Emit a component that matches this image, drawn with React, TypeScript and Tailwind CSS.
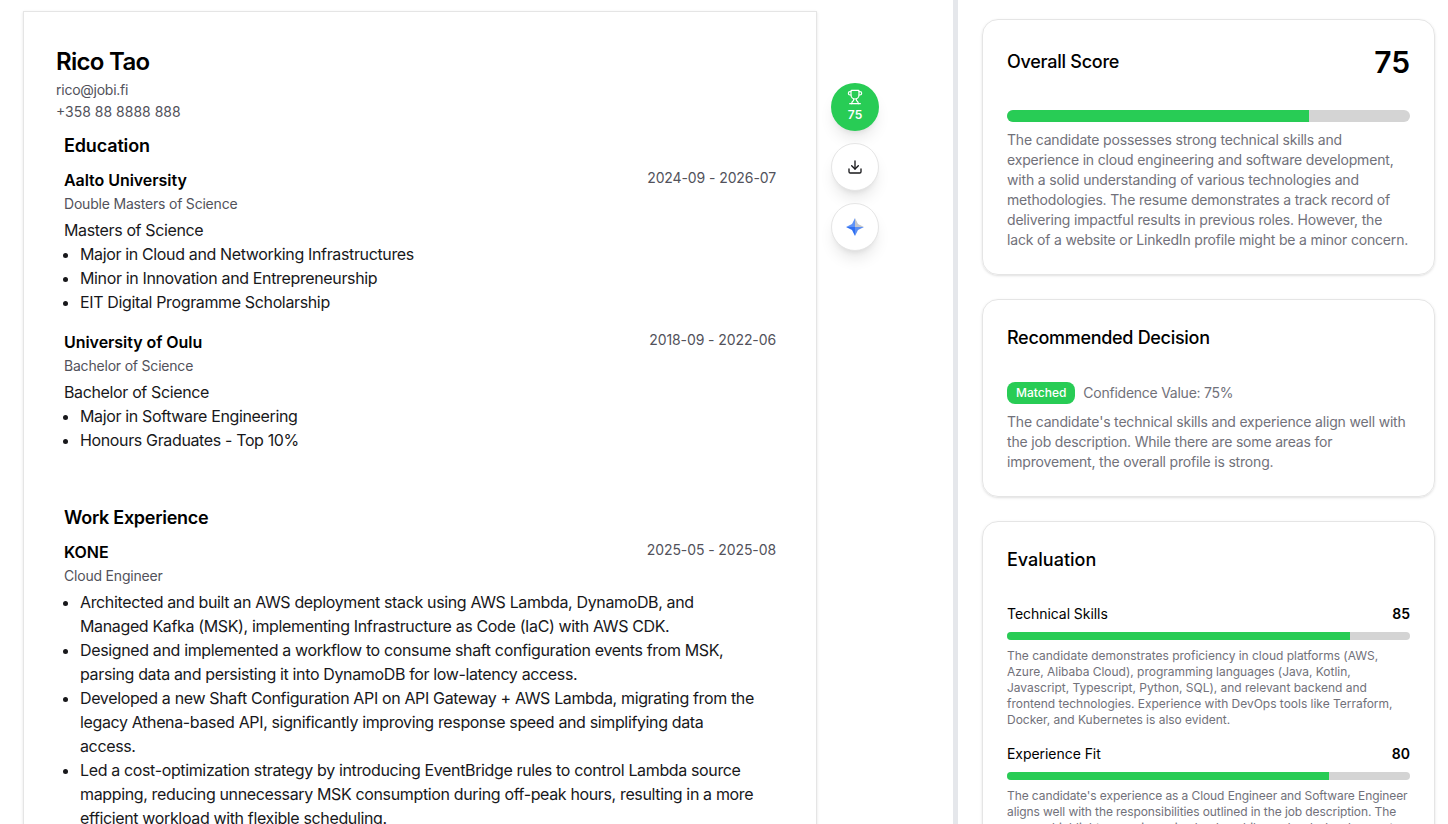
import { Download, Trophy } from 'lucide-react';

const font = { fontFamily: 'Inter, sans-serif' };

function Entry({ name, role, dates, children }: { name: string; role: string; dates: string; children: React.ReactNode }) {
  return (
    <div className="mb-4">
      <div className="flex justify-between items-start">
        <div className="text-[16px] leading-6 font-semibold text-black tracking-[-0.05px]">{name}</div>
        <div className="text-[14px] leading-5 text-[#52525b] tracking-[-0.1px]">{dates}</div>
      </div>
      <div className="text-[14px] leading-6 text-[#52525b] tracking-[-0.2px]">{role}</div>
      <div className="text-[16px] leading-6 mt-0.5 text-[#18181b] tracking-[-0.36px]">{children}</div>
    </div>
  );
}

function Bullets({ items }: { items: string[] }) {
  return (
    <ul className="list-disc pl-4 pr-4">
      {items.map((item) => (
        <li key={item}>{item}</li>
      ))}
    </ul>
  );
}

function Bar({ value, h }: { value: number; h: string }) {
  return (
    <div className={`w-full rounded-full bg-[#d4d4d4] overflow-hidden ${h}`}>
      <div className="h-full bg-[#28cc55]" style={{ width: `${value}%` }} />
    </div>
  );
}

function Metric({ label, value, text, tracking }: { label: string; value: number; text: string; tracking: string }) {
  return (
    <div className="mb-4">
      <div className="flex justify-between items-center text-[14px] leading-5 mb-2">
        <span className="text-black tracking-[-0.05px]">{label}</span>
        <span className="font-semibold text-black">{value}</span>
      </div>
      <Bar value={value} h="h-2" />
      <p className={`mt-2 text-[12px] leading-4 text-[#71717a] ${tracking}`}>{text}</p>
    </div>
  );
}

export default function App() {
  return (
    <div className="flex h-screen overflow-hidden bg-white" style={font}>
      {/* resume column */}
      <div className="w-[953px] shrink-0 flex items-start pl-[23px] pt-[11px]">
        <div className="w-[794px] shrink-0 border border-[#e5e5e5] shadow-sm bg-white pt-[34px] pl-8 pr-10 min-h-[1100px]">
          <h1 className="text-[24px] leading-8 font-semibold text-black tracking-[-0.7px]">Rico Tao</h1>
          <div className="text-[14px] leading-[22px] mt-[1px] text-[#52525b] tracking-[-0.25px]">rico@jobi.fi</div>
          <div className="text-[14px] leading-[22px] text-[#52525b]">+358 88 8888 888</div>

          <div className="pl-2 mt-[9px]">
            <h2 className="text-[18px] leading-7 font-semibold text-black mb-2 tracking-[-0.15px]">Education</h2>
            <Entry name="Aalto University" role="Double Masters of Science" dates="2024-09 - 2026-07">
              Masters of Science
              <Bullets
                items={[
                  'Major in Cloud and Networking Infrastructures',
                  'Minor in Innovation and Entrepreneurship',
                  'EIT Digital Programme Scholarship',
                ]}
              />
            </Entry>
            <Entry name="University of Oulu" role="Bachelor of Science" dates="2018-09 - 2022-06">
              Bachelor of Science
              <Bullets items={['Major in Software Engineering', 'Honours Graduates - Top 10%']} />
            </Entry>

            <h2 className="text-[18px] leading-7 font-semibold text-black mt-[52px] mb-2 tracking-[-0.27px]">Work Experience</h2>
            <Entry name="KONE" role="Cloud Engineer" dates="2025-05 - 2025-08">
              <Bullets
                items={[
                  'Architected and built an AWS deployment stack using AWS Lambda, DynamoDB, and Managed Kafka (MSK), implementing Infrastructure as Code (IaC) with AWS CDK.',
                  'Designed and implemented a workflow to consume shaft configuration events from MSK, parsing data and persisting it into DynamoDB for low-latency access.',
                  'Developed a new Shaft Configuration API on API Gateway + AWS Lambda, migrating from the legacy Athena-based API, significantly improving response speed and simplifying data access.',
                  'Led a cost-optimization strategy by introducing EventBridge rules to control Lambda source mapping, reducing unnecessary MSK consumption during off-peak hours, resulting in a more efficient workload with flexible scheduling.',
                ]}
              />
            </Entry>
          </div>
        </div>

        {/* floating actions */}
        <div className="flex flex-col gap-3 ml-[14px] mt-[72px]">
          <button className="w-12 h-12 rounded-full bg-[#28cc55] text-white flex flex-col items-center justify-center shadow-lg">
            <Trophy className="w-4 h-4 -mt-0.5" strokeWidth={1.75} />
            <span className="text-[12px] leading-4 font-semibold mt-[2px]">75</span>
          </button>
          <button className="w-12 h-12 rounded-full bg-white border border-[#e5e5e5] flex items-center justify-center shadow-lg">
            <Download className="w-4 h-4 text-[#18181b]" />
          </button>
          <button className="w-12 h-12 rounded-full bg-white border border-[#e5e5e5] flex items-center justify-center shadow-lg">
            <svg width="18" height="18" viewBox="0 0 18 18">
              <path d="M9 0 L12 6 L18 9 L9 9 Z" fill="#c3c6cc" />
              <path d="M9 0 L6 6 L0 9 L9 9 Z" fill="#5f93f7" />
              <path d="M0 9 L6 12 L9 18 L9 9 Z" fill="#2f6ff2" />
              <path d="M18 9 L12 12 L9 18 L9 9 Z" fill="#5c8ff2" />
            </svg>
          </button>
        </div>
      </div>

      {/* divider */}
      <div className="w-[5px] shrink-0 bg-[#e5e7eb]" />

      {/* analysis column */}
      <div className="flex-1 min-w-0 pl-6 pr-[13px] pt-[19px] flex flex-col gap-6">
        <section className="rounded-2xl border border-[#e5e5e5] shadow-sm px-6 pt-6 pb-6 shrink-0">
          <div className="flex justify-between items-center h-9">
            <h3 className="text-[18px] leading-7 font-medium text-black tracking-[-0.25px]">Overall Score</h3>
            <span className="text-[30px] leading-9 font-semibold text-black">75</span>
          </div>
          <div className="mt-[30px]">
            <Bar value={75} h="h-3" />
          </div>
          <p className="mt-2 text-[14px] leading-5 text-[#71717a] tracking-[-0.18px]">
            The candidate possesses strong technical skills and experience in cloud engineering and software development, with a solid understanding of various technologies and methodologies. The resume demonstrates a track record of delivering impactful results in previous roles. However, the lack of a website or LinkedIn profile might be a minor concern.
          </p>
        </section>

        <section className="rounded-2xl border border-[#e5e5e5] shadow-sm px-6 pt-6 pb-6 shrink-0">
          <h3 className="text-[18px] leading-7 font-medium text-black tracking-[-0.3px]">Recommended Decision</h3>
          <div className="flex items-center gap-2 mt-[30px]">
            <span className="rounded-lg bg-[#28cc55] text-white text-[12px] leading-4 font-medium px-[9px] py-[3px]">Matched</span>
            <span className="text-[14px] leading-5 text-[#71717a] tracking-[-0.25px]">Confidence Value: 75%</span>
          </div>
          <p className="mt-2 text-[14px] leading-5 text-[#71717a] tracking-[-0.18px]">
            The candidate's technical skills and experience align well with the job description. While there are some areas for improvement, the overall profile is strong.
          </p>
        </section>

        <section className="rounded-2xl border border-[#e5e5e5] shadow-sm px-6 pt-6 shrink-0">
          <h3 className="text-[18px] leading-7 font-medium text-black mb-[30px]">Evaluation</h3>
          <Metric
            label="Technical Skills"
            value={85}
            tracking="tracking-[-0.02px]"
            text="The candidate demonstrates proficiency in cloud platforms (AWS, Azure, Alibaba Cloud), programming languages (Java, Kotlin, Javascript, Typescript, Python, SQL), and relevant backend and frontend technologies. Experience with DevOps tools like Terraform, Docker, and Kubernetes is also evident."
          />
          <Metric
            label="Experience Fit"
            value={80}
            tracking="tracking-[-0.09px]"
            text="The candidate's experience as a Cloud Engineer and Software Engineer aligns well with the responsibilities outlined in the job description. The resume highlights experience in cloud, mobile, and web development."
          />
        </section>
      </div>
    </div>
  );
}
